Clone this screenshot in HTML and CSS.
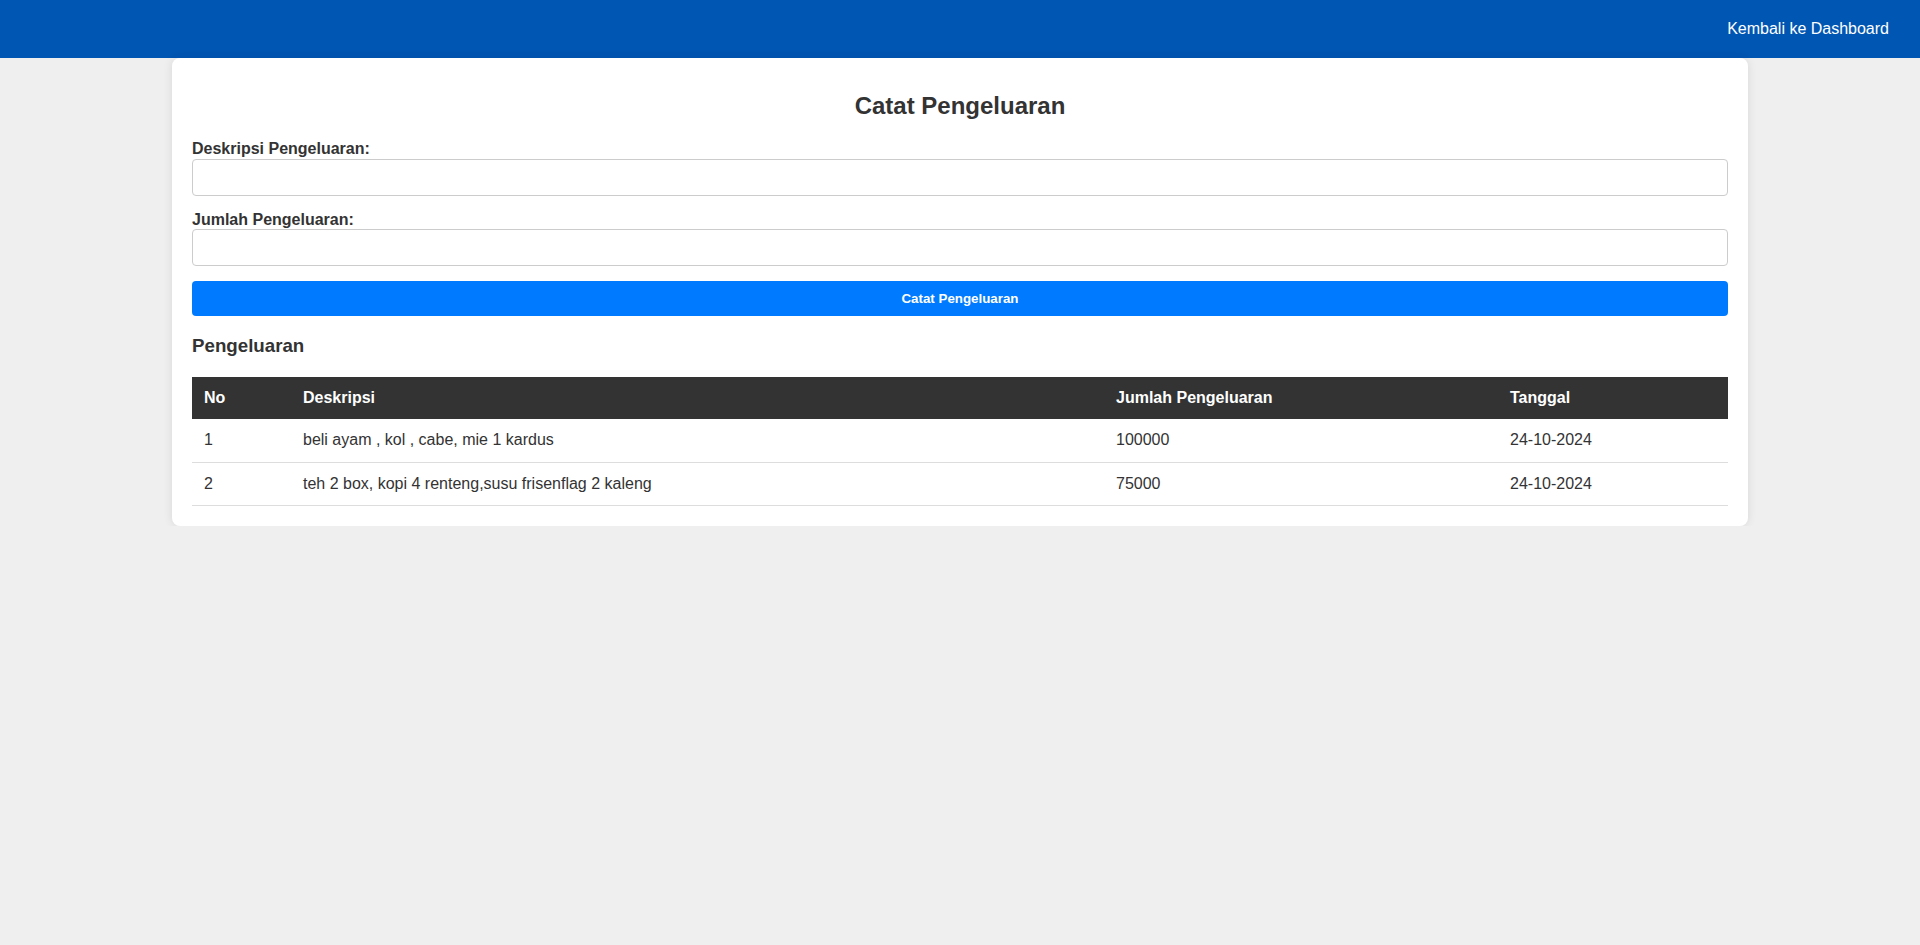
FILE: index.html
```html
<!DOCTYPE html>
<html lang="id">
<head>
<meta charset="utf-8">
<title>Catat Pengeluaran</title>
<link rel="stylesheet" href="styles.css">
</head>
<body>
<header class="topbar">
  <a class="nav-link" href="#">Kembali ke Dashboard</a>
</header>
<main class="card">
  <h2 class="title">Catat Pengeluaran</h2>
  <form class="form">
    <label class="label" for="desc">Deskripsi Pengeluaran:</label>
    <input class="input" id="desc" type="text">
    <label class="label" for="amount">Jumlah Pengeluaran:</label>
    <input class="input" id="amount" type="text">
    <button class="btn" type="button">Catat Pengeluaran</button>
  </form>
  <h3 class="subtitle">Pengeluaran</h3>
  <table class="table">
    <colgroup>
      <col class="c-no"><col class="c-desc"><col class="c-amt"><col class="c-date">
    </colgroup>
    <thead>
      <tr><th>No</th><th>Deskripsi</th><th>Jumlah Pengeluaran</th><th>Tanggal</th></tr>
    </thead>
    <tbody>
      <tr><td>1</td><td>beli ayam , kol , cabe, mie 1 kardus</td><td>100000</td><td>24-10-2024</td></tr>
      <tr><td>2</td><td>teh 2 box, kopi 4 renteng,susu frisenflag 2 kaleng</td><td>75000</td><td>24-10-2024</td></tr>
    </tbody>
  </table>
</main>
</body>
</html>
```

FILE: styles.css
```css
html, body {
  margin: 0;
  padding: 0;
}
body {
  background: #efefef;
  font-family: "Liberation Sans", Arial, sans-serif;
  color: #333;
}
.topbar {
  background: #0056b3;
  padding: 20px;
  display: flex;
  justify-content: flex-end;
  font-size: 16px;
  line-height: 18.4px;
}
.nav-link {
  color: #fff;
  text-decoration: none;
  margin: 0 11px 0 10px;
}
.card {
  display: block;
  width: 80%;
  margin: 0 auto;
  padding: 20px;
  background: #fff;
  border-radius: 8px;
  box-shadow: 0 0 10px rgba(0, 0, 0, 0.1);
}
.title {
  font-size: 24px;
  font-weight: bold;
  text-align: center;
  margin: 14px 0 20px;
  color: #333;
}
.form {
  display: flex;
  flex-direction: column;
}
.label {
  display: block;
  font-weight: bold;
  font-size: 16px;
  line-height: 18.4px;
}
.input {
  box-sizing: border-box;
  width: 100%;
  height: 37px;
  padding: 10px;
  border: 1px solid #ccc;
  border-radius: 4px;
  margin: 0 0 15px;
  font-family: "Liberation Sans", Arial, sans-serif;
  font-size: 13.33px;
}
.btn {
  height: 35px;
  width: 100%;
  padding: 10px;
  border: none;
  border-radius: 4px;
  background: #007bff;
  color: #fff;
  font-family: "Liberation Sans", Arial, sans-serif;
  font-size: 13.33px;
  font-weight: bold;
}
.subtitle {
  font-size: 18.72px;
  font-weight: bold;
  margin: 18.72px 0 0;
  color: #333;
}
.table {
  width: 100%;
  border-collapse: collapse;
  margin-top: 20px;
  table-layout: fixed;
  font-size: 16px;
}
.c-no { width: 99px; }
.c-desc { width: 813px; }
.c-amt { width: 394px; }
.c-date { width: 230px; }
.table th {
  background: #333;
  color: #fff;
  text-align: left;
  padding: 12px;
  font-weight: bold;
  line-height: 18.4px;
}
.table td {
  padding: 12px;
  border-bottom: 1px solid #ddd;
  line-height: 18.4px;
  color: #333;
}
```
